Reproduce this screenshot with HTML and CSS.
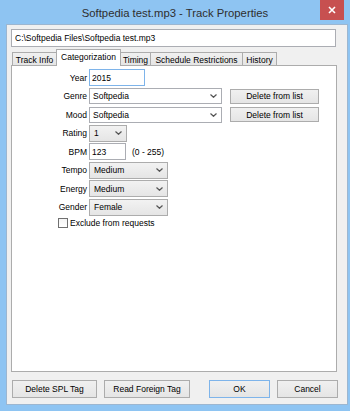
FILE: index.html
```html
<!DOCTYPE html>
<html lang="en">
<head>
  <meta charset="UTF-8">
  <meta name="viewport" content="width=device-width, initial-scale=1.0">
  <title>Track Properties</title>
  <link rel="stylesheet" href="styles.css">
</head>
<body>

  <div class="window">
    <div class="titlebar">
      <span class="title">Softpedia test.mp3 - Track Properties</span>
      <div class="close-btn">
        <svg width="8" height="8" viewBox="0 0 8 8"><path d="M1 1 L7 7 M7 1 L1 7" stroke="#fff" stroke-width="1.6" fill="none"/></svg>
      </div>
    </div>

    <div class="client">
      <input class="path-box" type="text" value="C:\Softpedia Files\Softpedia test.mp3" readonly>

      <div class="tabs">
        <div class="tab" style="width: 45px;">Track Info</div>
        <div class="tab active" style="width: 65px;">Categorization</div>
        <div class="tab" style="width: 30px;">Timing</div>
        <div class="tab" style="width: 92px;">Schedule Restrictions</div>
        <div class="tab" style="width: 34px;">History</div>
      </div>

      <div class="panel">
        <div class="row">
          <label class="lbl">Year</label>
          <input class="field focused year" type="text" value="2015">
        </div>
        <div class="row">
          <label class="lbl">Genre</label>
          <div class="combo edit wide"><span>Softpedia</span><svg class="chev" width="7" height="4" viewBox="0 0 7 4"><path d="M0.5 0.5 L3.5 3.3 L6.5 0.5" stroke="#555" stroke-width="1.2" fill="none"/></svg></div>
          <button class="btn small">Delete from list</button>
        </div>
        <div class="row">
          <label class="lbl">Mood</label>
          <div class="combo edit wide"><span>Softpedia</span><svg class="chev" width="7" height="4" viewBox="0 0 7 4"><path d="M0.5 0.5 L3.5 3.3 L6.5 0.5" stroke="#555" stroke-width="1.2" fill="none"/></svg></div>
          <button class="btn small">Delete from list</button>
        </div>
        <div class="row">
          <label class="lbl">Rating</label>
          <div class="combo list rating"><span>1</span><svg class="chev" width="7" height="4" viewBox="0 0 7 4"><path d="M0.5 0.5 L3.5 3.3 L6.5 0.5" stroke="#555" stroke-width="1.2" fill="none"/></svg></div>
        </div>
        <div class="row">
          <label class="lbl">BPM</label>
          <input class="field bpm" type="text" value="123">
          <span class="hint">(0 - 255)</span>
        </div>
        <div class="row">
          <label class="lbl">Tempo</label>
          <div class="combo list medium"><span>Medium</span><svg class="chev" width="7" height="4" viewBox="0 0 7 4"><path d="M0.5 0.5 L3.5 3.3 L6.5 0.5" stroke="#555" stroke-width="1.2" fill="none"/></svg></div>
        </div>
        <div class="row">
          <label class="lbl">Energy</label>
          <div class="combo list medium"><span>Medium</span><svg class="chev" width="7" height="4" viewBox="0 0 7 4"><path d="M0.5 0.5 L3.5 3.3 L6.5 0.5" stroke="#555" stroke-width="1.2" fill="none"/></svg></div>
        </div>
        <div class="row">
          <label class="lbl">Gender</label>
          <div class="combo list medium"><span>Female</span><svg class="chev" width="7" height="4" viewBox="0 0 7 4"><path d="M0.5 0.5 L3.5 3.3 L6.5 0.5" stroke="#555" stroke-width="1.2" fill="none"/></svg></div>
        </div>
        <div class="row check-row">
          <span class="checkbox"></span>
          <span>Exclude from requests</span>
        </div>
      </div>

      <div class="buttons">
        <button class="btn big" style="width: 85px;">Delete SPL Tag</button>
        <button class="btn big" style="width: 86px; margin-left: 7px;">Read Foreign Tag</button>
        <button class="btn big default" style="width: 61px; margin-left: 19px;">OK</button>
        <button class="btn big" style="width: 61px; margin-left: 7px;">Cancel</button>
      </div>
    </div>
  </div>

</body>
</html>
```

FILE: styles.css
```css
body {
  margin: 0;
  padding: 0;
  font-family: "Liberation Sans", Arial, sans-serif;
  font-size: 8.5px;
  color: #000;
  background-color: #8ec4f2;
}
.window {
  width: 350px;
  height: 411px;
  background-color: #8ec4f2;
  display: flex;
  flex-direction: column;
}
.titlebar {
  height: 24px;
  display: flex;
  align-items: center;
  justify-content: center;
  position: relative;
}
.title {
  font-size: 11.3px;
  color: #2e2e2e;
  margin-top: 1px;
}
.close-btn {
  position: absolute;
  top: 0;
  right: 6px;
  width: 24px;
  height: 20px;
  background-color: #c75050;
  display: flex;
  align-items: center;
  justify-content: center;
}
.client {
  margin-left: 6px;
  width: 336px;
  height: 378px;
  border: 1px solid #9cb6d0;
  background-color: #f0f0f0;
  padding: 4px 0 0 4px;
  box-sizing: content-box;
  display: flex;
  flex-direction: column;
}
.client {
  height: 375px;
}
input {
  font-family: inherit;
  font-size: inherit;
  color: #000;
  margin: 0;
  outline: none;
}
.path-box {
  width: 325px;
  height: 18px;
  box-sizing: border-box;
  border: 1px solid #abadb3;
  background: #fff;
  padding: 0 3px;
}
.tabs {
  display: flex;
  align-items: flex-end;
  height: 16px;
  margin-top: 2px;
  margin-left: 1px;
}
.tab {
  height: 13px;
  box-sizing: border-box;
  border: 1px solid #acacac;
  border-bottom: none;
  border-left: none;
  background: linear-gradient(#f0f0f0, #e5e5e5);
  display: flex;
  align-items: center;
  justify-content: center;
  white-space: nowrap;
  padding-top: 1px;
}
.tab:first-child {
  border-left: 1px solid #acacac;
}
.tab.active {
  height: 17px;
  background: #fff;
  border-left: 1px solid #acacac;
  margin-left: -1px;
  position: relative;
  z-index: 1;
  margin-bottom: -1px;
  padding-bottom: 3px;
}
.panel {
  width: 326px;
  height: 307px;
  box-sizing: border-box;
  border: 1px solid #acacac;
  background: #fff;
  padding: 3px 0 0 0;
  display: flex;
  flex-direction: column;
  gap: 1.5px;
}
.row {
  display: flex;
  align-items: center;
  height: 17px;
}
.lbl {
  width: 75px;
  text-align: right;
  margin-right: 2px;
  white-space: nowrap;
}
.field {
  height: 17px;
  box-sizing: border-box;
  border: 1px solid #abadb3;
  background: #fff;
  padding: 0 2px;
}
.field.focused {
  border-color: #7eb4ea;
}
.year {
  width: 56px;
}
.bpm {
  width: 37px;
}
.hint {
  margin-left: 6px;
}
.combo {
  height: 17px;
  box-sizing: border-box;
  display: flex;
  align-items: center;
  padding: 0 4px 0 3px;
  border: 1px solid #acacac;
}
.combo span {
  flex: 1;
  white-space: nowrap;
}
.combo.edit {
  height: 16px;
  border-color: #abadb3;
  background: #fff;
  padding-left: 3px;
}
.combo.list {
  background: linear-gradient(#f2f2f2, #e5e5e5);
  padding-left: 4px;
}
.wide {
  width: 133px;
}
.rating {
  width: 38px;
}
.medium {
  width: 79px;
}
.btn {
  font-family: inherit;
  font-size: inherit;
  color: #000;
  border: 1px solid #acacac;
  background: linear-gradient(#f0f0f0, #e5e5e5);
  padding: 0;
  margin: 0;
  box-sizing: border-box;
}
.btn.small {
  width: 89px;
  height: 15px;
  margin-left: 8px;
}
.check-row {
  height: 12px;
  padding-left: 46px;
}
.checkbox {
  width: 10px;
  height: 10px;
  box-sizing: border-box;
  border: 1px solid #707070;
  background: linear-gradient(#f4f4f4, #fff);
  margin-right: 2px;
}
.buttons {
  display: flex;
  margin-top: 8px;
  margin-left: 1px;
}
.btn.big {
  height: 18px;
}
.btn.default {
  border-color: #7eb4ea;
}
```
